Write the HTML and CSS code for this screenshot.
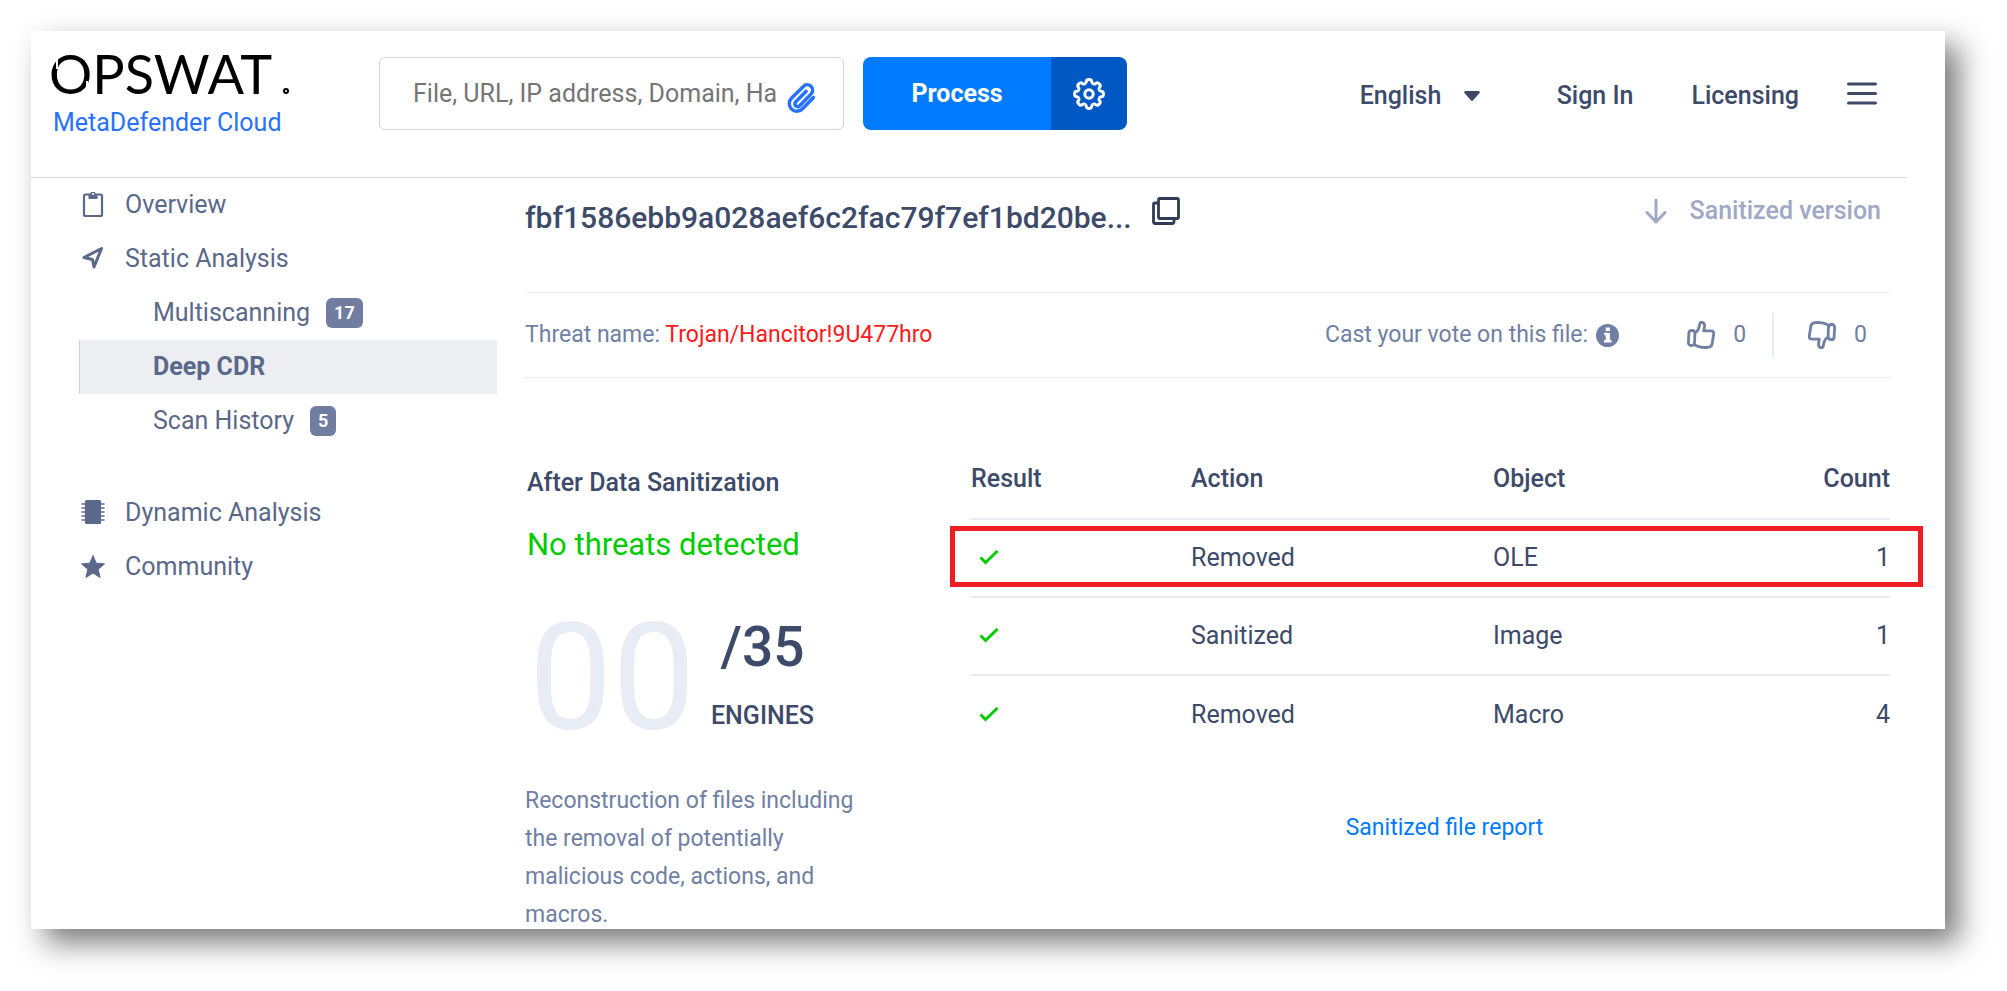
FILE: index.html
```html
<!DOCTYPE html>
<html lang="en">
<head>
<meta charset="utf-8">
<meta name="viewport" content="width=device-width, initial-scale=1">
<title>MetaDefender Cloud</title>
<link rel="stylesheet" href="styles.css">
</head>
<body>
<div class="panel">
  <header class="header">
    <a class="brand" href="#">
      <svg class="brand-logo" viewBox="0 0 240 38" role="img" aria-label="OPSWAT">
        <text class="brand-word" x="-2" y="37">OPSWAT</text>
        <g class="brand-cuts">
          <path d="M6 -2L6 12M36 24L36 38"/>
        </g>
        <circle class="brand-ring" cx="235" cy="34" r="2"/>
      </svg>
      <span class="brand-product">MetaDefender Cloud</span>
    </a>
    <form class="search">
      <div class="search-field">
        <input class="search-input" type="text" aria-label="Search" placeholder="File, URL, IP address, Domain, Ha">
        <button class="attach" type="button" aria-label="Attach file">
          <svg width="32" height="32" viewBox="0 0 24 24" fill="none" stroke="currentColor" stroke-width="2.6" stroke-linecap="round" stroke-linejoin="round"><path d="M20.6 11.6l-8.35 8.64a5.4 5.4 0 0 1-8.2-8L13 3.4a4 4 0 0 1 5.9 5.5l-8.6 8.9a2 2 0 0 1-3.1-2.8l7.900-8"/></svg>
        </button>
      </div>
      <div class="process">
        <button class="process-main" type="button">Process</button>
        <button class="process-settings" type="button" aria-label="Settings">
          <svg width="32" height="32" viewBox="-16 -16 32 32" fill="none" stroke="currentColor" stroke-width="3">
            <defs><path id="tooth" d="M-4.2 -10.2C-2.6 -10.9 -2.9 -11.6 -2.7 -12.6C-2.4 -15 2.4 -15 2.7 -12.6C2.9 -11.6 2.6 -10.9 4.2 -10.2"/></defs>
            <use href="#tooth"/><use href="#tooth" transform="rotate(45)"/><use href="#tooth" transform="rotate(90)"/><use href="#tooth" transform="rotate(135)"/><use href="#tooth" transform="rotate(180)"/><use href="#tooth" transform="rotate(225)"/><use href="#tooth" transform="rotate(270)"/><use href="#tooth" transform="rotate(315)"/>
            <circle r="4.2"/>
          </svg>
        </button>
      </div>
    </form>
    <nav class="topnav" aria-label="Account">
      <div class="language">
        <select class="language-select" aria-label="Language"><option>English</option></select>
        <svg class="language-caret" width="16" height="10" viewBox="0 0 16 10" fill="currentColor"><path d="M1.5 0h13a1.2 1.2 0 0 1 1 2L9.2 9.2a1.6 1.6 0 0 1-2.4 0L.5 2a1.2 1.2 0 0 1 1-2z"/></svg>
      </div>
      <a class="topnav-link" href="#">Sign In</a>
      <a class="topnav-link" href="#">Licensing</a>
      <button class="menu" type="button" aria-label="Menu">
        <svg width="30" height="24" viewBox="0 0 30 24" stroke="currentColor" stroke-width="3" stroke-linecap="round"><path d="M1.500 2h27M1.500 11.500h27M1.500 21h27"/></svg>
      </button>
    </nav>
  </header>

  <div class="body">
    <nav class="sidebar" aria-label="Report sections">
      <a class="side-item" href="#">
        <svg class="side-icon" viewBox="0 0 24 26" fill="none" stroke="currentColor" stroke-width="2.200"><rect x="3" y="2.500" width="18" height="21.500" rx="1.500"/><path d="M7.500 2h2a2.500 2.500 0 0 1 5 0h2v5h-9z" fill="currentColor" stroke="none"/><circle cx="12" cy="2" r="1" fill="#fff" stroke="none"/></svg>
        Overview</a>
      <a class="side-item" href="#">
        <svg class="side-icon" viewBox="0 0 24 26" fill="none" stroke="currentColor" stroke-width="3" stroke-linejoin="round"><path d="M20.500 2.500L3 11.500l8.500 2L13 21z"/></svg>
        Static Analysis</a>
      <a class="side-item side-sub" href="#">Multiscanning <span class="badge">17</span></a>
      <a class="side-item side-sub side-active" href="#" aria-current="page">Deep CDR</a>
      <a class="side-item side-sub" href="#">Scan History <span class="badge">5</span></a>
      <a class="side-item side-group" href="#">
        <svg class="side-icon" viewBox="0 0 24 26" fill="currentColor"><rect x="4" y="0" width="16" height="24" rx="1.500"/><path d="M1 4h22M1 8h22M1 12h22M1 16h22M1 20h22" stroke="currentColor" stroke-width="1.600" stroke-linecap="round"/></svg>
        Dynamic Analysis</a>
      <a class="side-item" href="#">
        <svg class="side-icon" viewBox="0 0 24 26" fill="currentColor" stroke="currentColor" stroke-linejoin="round"><path d="M12 1.500l3.200 7.700 8.300.7-6.300 5.400 1.900 8.200-7.100-4.400-7.100 4.400 1.900-8.200L.5 9.900l8.300-.7z"/></svg>
        Community</a>
    </nav>

    <main class="main">
      <div class="title-row">
        <h1 class="hash">fbf1586ebb9a028aef6c2fac79f7ef1bd20be...</h1>
        <button class="copy" type="button" aria-label="Copy hash">
          <svg width="28" height="28" viewBox="0 0 28 28" fill="none" stroke="currentColor" stroke-width="2.800" stroke-linejoin="round"><rect x="6.500" y="1.500" width="20" height="20" rx="1.500"/><path d="M6.500 6H3a1.500 1.500 0 0 0-1.500 1.500V25A1.500 1.500 0 0 0 3 26.500h17.500A1.500 1.500 0 0 0 22 25v-3.500"/></svg>
        </button>
        <button class="download" type="button" disabled>
          <svg width="22" height="26" viewBox="0 0 22 26" fill="none" stroke="currentColor" stroke-width="3" stroke-linecap="round" stroke-linejoin="round"><path d="M11 2v22M2 14.500l9 9.500 9-9.500"/></svg>
          Sanitized version</button>
      </div>

      <section class="threat">
        <p class="threat-name">Threat name: <span class="threat-value">Trojan/Hancitor!9U477hro</span></p>
        <div class="votes">
          <span>Cast your vote on this file:</span>
          <svg class="info" width="23" height="23" viewBox="0 0 23 23"><circle cx="11.500" cy="11.500" r="11.500" fill="currentColor"/><path d="M9.700 3.500h4.200v3.600H9.700zM8.200 8.800h5.700v7.200h1.600v2.500H8V16h1.700v-4.700H8.200z" fill="#fff"/></svg>
          <button class="vote" type="button" aria-label="Vote up">
            <svg width="28" height="28" viewBox="0 0 28 28" fill="none" stroke="currentColor" stroke-width="2.800" stroke-linejoin="round"><path id="thumb" d="M7.500 12c2.500-1 4.500-3.500 5-8 .2-2 1-2.800 2.200-2.700 2 .2 3 2 2.800 4.200l-.8 4.300h7.300c2 0 3 1.300 2.700 3.200l-1.500 9.500c-.4 2.500-1.700 3.700-4.200 3.900-5 .4-8.500-.2-11-1.400l-2.500-1.200M4.800 9.300c-1.800 0-2.800.8-2.900 2.600l-.5 9c-.1 2.300.8 3.600 3 3.600 2.300 0 3.100-1 3.200-3.200l.3-8.600c0-2.300-1-3.400-3.100-3.400z"/></svg>
            0</button>
          <button class="vote vote-down" type="button" aria-label="Vote down">
            <svg width="28" height="28" viewBox="0 0 28 28" fill="none" stroke="currentColor" stroke-width="2.800" stroke-linejoin="round"><use href="#thumb" transform="rotate(180 14 14)"/></svg>
            0</button>
        </div>
      </section>

      <div class="report">
        <section class="summary">
          <h2 class="summary-title">After Data Sanitization</h2>
          <p class="summary-status">No threats detected</p>
          <div class="score">
            <span class="score-hits">00</span>
            <div class="score-total">
              <span class="score-number">/35</span>
              <span class="score-label">ENGINES</span>
            </div>
          </div>
          <p class="summary-text">Reconstruction of files including the removal of potentially malicious code, actions, and macros.</p>
        </section>

        <section class="objects">
          <div class="table-wrap">
            <table class="table">
              <thead>
                <tr><th class="col-result">Result</th><th class="col-action">Action</th><th>Object</th><th class="count">Count</th></tr>
              </thead>
              <tbody>
                <tr><td><svg class="check" viewBox="0 0 20 16" role="img" aria-label="Clean"><path d="M1.500 7.500l5 5L18.500 1"/></svg></td><td>Removed</td><td>OLE</td><td class="count">1</td></tr>
                <tr><td><svg class="check" viewBox="0 0 20 16" role="img" aria-label="Clean"><path d="M1.500 7.500l5 5L18.500 1"/></svg></td><td>Sanitized</td><td>Image</td><td class="count">1</td></tr>
                <tr><td><svg class="check" viewBox="0 0 20 16" role="img" aria-label="Clean"><path d="M1.500 7.500l5 5L18.500 1"/></svg></td><td>Removed</td><td>Macro</td><td class="count">4</td></tr>
              </tbody>
            </table>
            <div class="highlight"></div>
          </div>
          <a class="report-link" href="#">Sanitized file report</a>
        </section>
      </div>
    </main>
  </div>
</div>
</body>
</html>
```
FILE: styles.css
```css
* { box-sizing: border-box; }

body {
  margin: 0;
  padding: 31px 62px 62px 31px;
  background: #fff;
  color: #3d4a69;
  font-family: Roboto, "Liberation Sans", sans-serif;
  font-size: 25px;
  line-height: 30px;
}

h1, h2, p { margin: 0; }
a { color: inherit; text-decoration: none; }
svg { display: block; flex: none; }

button, input, select {
  margin: 0;
  padding: 0;
  border: 0;
  background: none;
  color: inherit;
  font: inherit;
}

.panel {
  background: #fff;
  box-shadow: 14px 14px 28px rgba(0, 0, 0, 0.52);
}

/* Header */
.header {
  display: flex;
  align-items: flex-start;
  height: 147px;
  margin-right: 38px;
  padding: 26px 30px 0 20px;
  border-bottom: 1px solid #d5d5d5;
}

.brand { width: 328px; flex: none; }
.brand-logo { width: 240px; height: 38px; overflow: visible; }
.brand-word { font-family: Lato, sans-serif; font-size: 54px; fill: #000; }
.brand-cuts { stroke: #fff; stroke-width: 2; fill: none; }
.brand-ring { stroke: #000; stroke-width: 2; fill: none; }
.brand-product { display: block; margin-top: 13px; padding-left: 2px; color: #2672ff; }

.search { display: flex; flex: 1; gap: 19px; max-width: 748px; }
.search-field {
  display: flex;
  align-items: center;
  flex: 1;
  height: 73px;
  padding: 0 25px 0 33px;
  border: 1px solid #d5d5d5;
  border-radius: 6px;
}
.search-input { flex: 1; min-width: 0; outline: 0; }
.search-input::placeholder { color: #757575; opacity: 1; }
.attach { padding-top: 8px; color: #2672ff; }

.process { display: flex; height: 73px; border-radius: 8px; overflow: hidden; color: #fff; }
.process-main { width: 188px; background: #007aff; font-weight: 700; }
.process-settings { display: grid; place-items: center; width: 76px; background: #0058c4; }

.topnav { display: flex; align-items: center; height: 77px; margin-left: auto; font-weight: 500; }
.topnav-link { margin-right: 58px; }
.language { position: relative; display: flex; align-items: center; margin-right: 77px; }
.language-select { width: 120px; appearance: none; }
.language-caret { position: absolute; right: 0; pointer-events: none; }
.menu { margin-left: -10px; padding-bottom: 4px; }

/* Body */
.body { display: flex; gap: 28px; padding: 0 55px 0 48px; }

.sidebar { width: 418px; flex: none; color: #5a6889; }
.side-item { display: flex; align-items: center; height: 54px; padding-left: 2px; }
.side-icon { width: 24px; height: 26px; margin-right: 20px; }
.side-sub { padding-left: 74px; }
.side-active { background: #edeef2; border-left: 1px solid #ccd2e2; font-weight: 700; }
.side-sub.side-active { padding-left: 73px; }
.side-group { margin-top: 38px; }
.badge {
  margin-left: 16px;
  padding: 0 8px;
  border-radius: 6px;
  background: #707ca0;
  color: #fff;
  font-size: 18px;
  font-weight: 700;
}

.main { flex: 1; min-width: 0; }

.title-row { display: flex; align-items: center; height: 114px; padding-bottom: 48px; }
.hash { font-size: 30px; line-height: 38px; font-weight: 500; padding-top: 14px; }
.copy { margin-left: 20px; color: #303c55; }
.download { display: flex; align-items: center; gap: 23px; margin-left: auto; margin-right: 9px; color: #9fa9c3; font-weight: 500; }

.threat {
  display: flex;
  align-items: center;
  justify-content: space-between;
  height: 86px;
  border-top: 1px solid #e8ebf3;
  border-bottom: 1px solid #e8ebf3;
  color: #707fa3;
  font-size: 23px;
}
.threat-value { color: #ff1a1a; }
.votes { display: flex; align-items: center; }
.info { margin-left: 8px; margin-right: 68px; }
.vote { display: flex; align-items: center; gap: 18px; height: 45px; padding-right: 26px; }
.vote-down { padding-left: 34px; padding-right: 23px; border-left: 2px solid #e8ebf3; }

.report { display: flex; justify-content: space-between; padding-top: 80px; }

.summary { width: 350px; }
.summary-title { padding: 10px 0 0 2px; font-size: 25px; line-height: 30px; font-weight: 500; }
.summary-status { padding-left: 2px; margin-top: 28px; color: #0c0; font-size: 31px; line-height: 38px; }
.score { display: flex; align-items: center; height: 174px; margin-top: 28px; padding-left: 4px; }
.score-hits { width: 182px; color: #e8ecf4; font-size: 148px; line-height: 148px; }
.score-total { display: flex; flex-direction: column; align-items: center; gap: 26px; padding-bottom: 8px; }
.score-number { font-size: 55px; line-height: 56px; font-weight: 500; }
.score-label { font-weight: 500; }
.summary-text { width: 345px; margin-top: 16px; margin-bottom: -5px; color: #707fa3; font-size: 23px; line-height: 38px; }

.objects { display: flex; flex-direction: column; width: 919px; }
.table-wrap { position: relative; }
.table { width: 100%; border-collapse: collapse; table-layout: fixed; }
.table th, .table td { padding: 0; text-align: left; vertical-align: middle; }
.table th { height: 61px; padding-bottom: 19px; font-weight: 500; }
.table td { height: 78px; border-top: 2px solid #e8ecf2; }
.table .count { text-align: right; }
.col-result { width: 220px; }
.col-action { width: 302px; }
.check { width: 20px; height: 16px; margin-left: 8px; fill: none; stroke: #0c0; stroke-width: 3; }
.highlight { position: absolute; top: 68px; left: -21px; right: -33px; height: 61px; border: 5px solid #ee1c23; }
.report-link { align-self: center; margin: 60px 0 0 28px; color: #007aff; font-size: 23px; }
```
